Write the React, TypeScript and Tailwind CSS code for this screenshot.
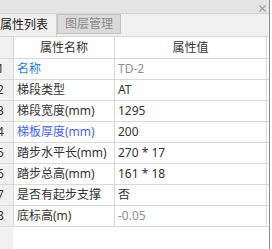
const rows = [
  { n: "1", name: "名称", value: "TD-2", nameClass: "text-[#2f7be0]", valueClass: "text-[#8e8e8e]" },
  { n: "2", name: "梯段类型", value: "AT", nameClass: "text-[#333333]", valueClass: "text-[#333333]" },
  { n: "3", name: "梯段宽度(mm)", value: "1295", nameClass: "text-[#333333]", valueClass: "text-[#333333]" },
  { n: "4", name: "梯板厚度(mm)", value: "200", nameClass: "text-[#4a63e6]", valueClass: "text-[#333333]" },
  { n: "5", name: "踏步水平长(mm)", value: "270 * 17", nameClass: "text-[#333333]", valueClass: "text-[#333333]" },
  { n: "6", name: "踏步总高(mm)", value: "161 * 18", nameClass: "text-[#333333]", valueClass: "text-[#333333]" },
  { n: "7", name: "是否有起步支撑", value: "否", nameClass: "text-[#333333]", valueClass: "text-[#333333]" },
  { n: "8", name: "底标高(m)", value: "-0.05", nameClass: "text-[#333333]", valueClass: "text-[#8e8e8e]" },
];

export default function App() {
  return (
    <div className="flex h-[249px] w-[272px] overflow-hidden bg-white font-['Noto_Sans','Noto_Sans_CJK_SC',sans-serif] text-[12px] leading-none">
      <div className="flex w-[270px] flex-col border-r border-[#8c8c8c] bg-white">
        {/* title bar */}
        <div className="flex h-[14px] shrink-0 items-center justify-end border-b border-[#d2d2d2] bg-[#e4e4e4] pr-[3px]">
          <svg width="7" height="7" viewBox="0 0 7 7" className="mt-[3px]">
            <path d="M0.5 0.5L6.5 6.5M6.5 0.5L0.5 6.5" stroke="#9c9c9c" strokeWidth="1.1" />
          </svg>
        </div>

        {/* tabs */}
        <div className="flex h-[23px] shrink-0 items-start border-b border-[#d6d6d6] bg-[#f0f0f0]">
          <div className="flex h-[22px] w-[57px] items-center border-r border-[#d0d0d0] pl-[0px] text-[12px] text-[#1a1a1a]">
            属性列表
          </div>
          <div className="flex h-[20px] w-[64px] items-center justify-center border border-[#c2c2c2] bg-[#dadada] text-[12px] text-[#8a8a8a]">
            图层管理
          </div>
        </div>

        {/* table */}
        <div className="flex flex-1 flex-col">
          <div className="flex h-[22px] shrink-0 border-b border-[#d9d9d9]">
            <div className="w-[14px] border-r border-[#d9d9d9] bg-[#f0f0f0]" />
            <div className="flex w-[101px] items-center justify-center border-r border-[#d9d9d9] text-[#333333]">
              属性名称
            </div>
            <div className="flex w-[152px] items-center justify-center border-r border-[#d9d9d9] text-[#333333]">
              属性值
            </div>
          </div>

          {rows.map((r) => (
            <div key={r.n} className="flex h-[21px] shrink-0 border-b border-[#d9d9d9]">
              <div className="flex w-[14px] items-center overflow-hidden border-r border-[#d9d9d9] bg-[#f0f0f0] text-[#333333]">
                <span className="-ml-[3px]">{r.n}</span>
              </div>
              <div className={`flex w-[101px] items-center border-r border-[#d9d9d9] pl-[3px] ${r.nameClass}`}>
                {r.name}
              </div>
              <div className={`flex w-[152px] items-center border-r border-[#d9d9d9] pl-[3px] ${r.valueClass}`}>
                {r.value}
              </div>
            </div>
          ))}

          <div className="flex flex-1">
            <div className="w-[13px] bg-[#f0f0f0]" />
          </div>
        </div>
      </div>
    </div>
  );
}
